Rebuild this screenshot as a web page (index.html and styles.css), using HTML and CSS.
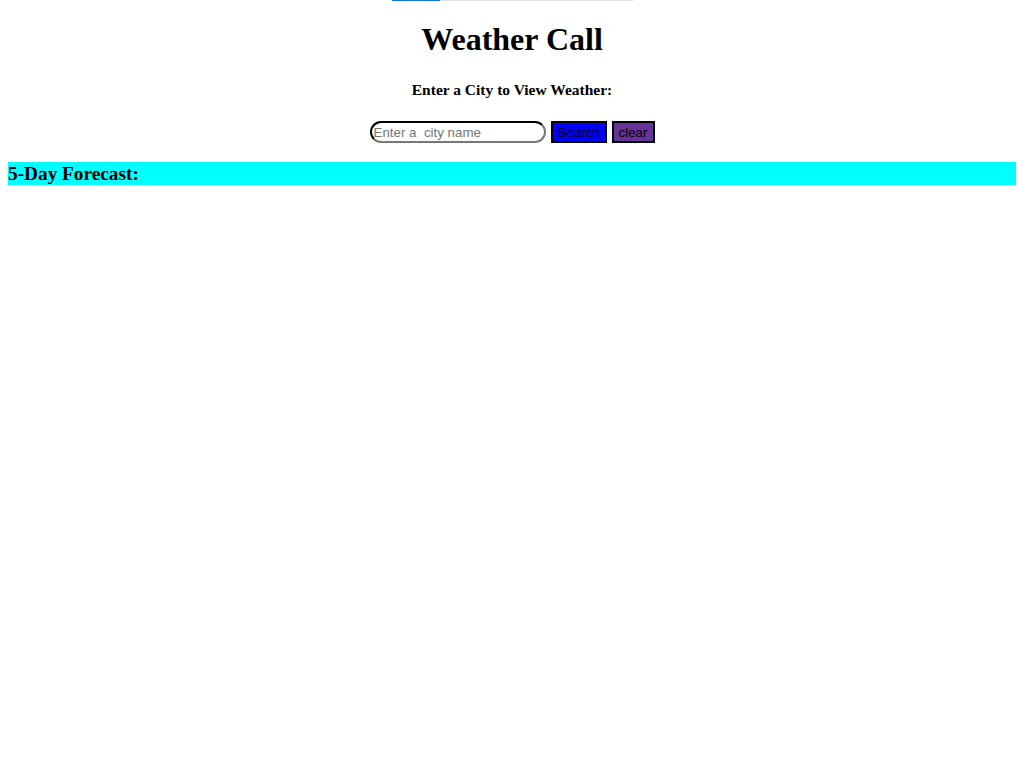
FILE: index.html
```html
<!DOCTYPE html>
<html lang="en">
<head>
<meta charset="utf-8">
<title>Weather Call</title>
<link rel="stylesheet" href="styles.css">
</head>
<body>
<div class="progress"><div class="progress-fill" style="width: 48px"></div></div>
<h1 class="title">Weather Call</h1>
<h4 class="subtitle">Enter a City to View Weather:</h4>
<form class="search-row">
  <input class="city-input" type="text" placeholder="Enter a  city name">
  <button class="btn btn-search" type="button">Search</button>
  <button class="btn btn-clear" type="button">clear</button>
</form>
<h3 class="forecast-title">5-Day Forecast:</h3>
</body>
</html>
```
FILE: styles.css
```css
html, body {
  background: #ffffff;
}
body {
  margin: 0 8px;
  font-family: "Liberation Serif", "Times New Roman", serif;
  color: #000;
}
.progress {
  width: 241px;
  height: 1px;
  margin: 0 auto;
  background: #e3e3e3;
  display: flex;
}
.progress-fill {
  height: 1px;
  background: #0a78e0;
}
.title {
  text-align: center;
  font-size: 32px;
  font-weight: bold;
  margin: 20.4px 0 21.44px;
}
.subtitle {
  text-align: center;
  font-size: 15.5px;
  line-height: 18px;
  font-weight: bold;
  margin: 22.5px 0 22.5px;
}
.search-row {
  display: flex;
  justify-content: center;
  align-items: center;
  gap: 5px;
  margin: 0;
}
.city-input {
  box-sizing: border-box;
  width: 176px;
  height: 22px;
  border: 2px inset #767676;
  border-top-color: #333;
  border-left-color: #333;
  border-right-color: #777;
  border-bottom-color: #777;
  border-radius: 11px;
  padding: 1px 2px;
  font-family: "Liberation Sans", Arial, sans-serif;
  font-size: 13.33px;
  color: #000;
  background: #fff;
  outline: none;
}
.city-input::placeholder {
  color: #757575;
  white-space: pre;
}
.btn {
  box-sizing: border-box;
  height: 22px;
  border: 2px solid #000;
  border-radius: 0;
  font-family: "Liberation Sans", Arial, sans-serif;
  font-size: 13.33px;
  color: #000;
  padding: 1px 4px;
  margin: 0;
}
.btn-search {
  width: 56px;
  background: #0000ff;
}
.btn-clear {
  width: 43px;
  background: #663399;
}
.forecast-title {
  background: #00ffff;
  font-size: 19.3px;
  line-height: 23px;
  font-weight: bold;
  margin: 19px 0;
}
```
